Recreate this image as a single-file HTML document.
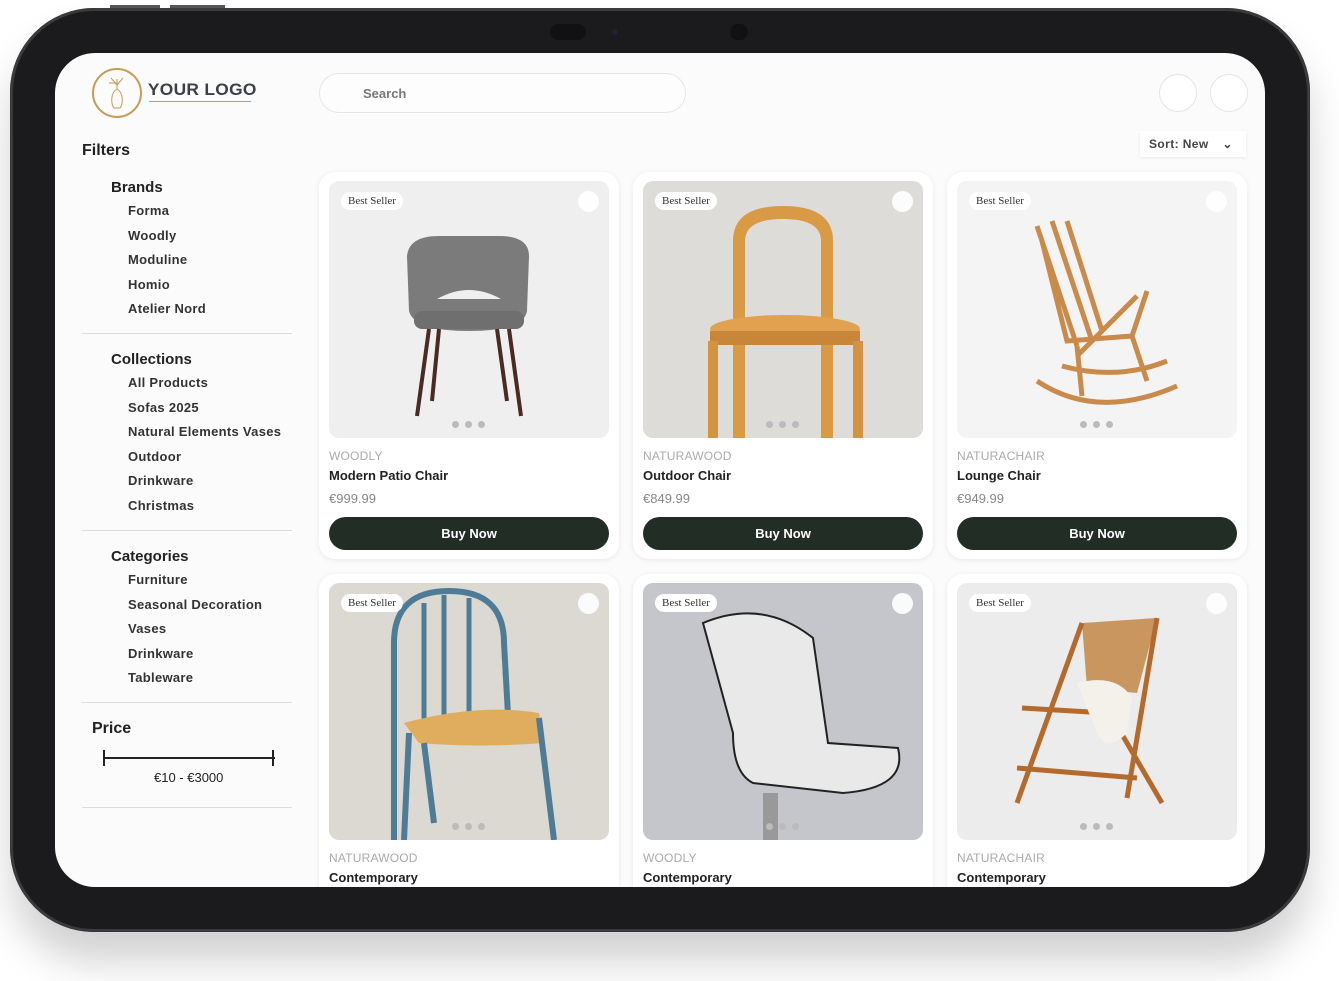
<!DOCTYPE html>
<html><head><meta charset="utf-8"><style>
*{box-sizing:border-box;margin:0;padding:0}
body{width:1339px;height:981px;background:#fff;font-family:"Liberation Sans",sans-serif;position:relative;overflow:hidden}
.dev{position:absolute;left:10px;top:8px;width:1300px;height:924px;background:#1b1b1d;border-radius:84px;box-shadow:0 30px 40px rgba(0,0,0,.18),inset 0 0 0 3px #3a3a3c}
.scr{position:absolute;left:55px;top:53px;width:1210px;height:834px;background:#fbfbfb;border-radius:40px;overflow:hidden}
.a{position:absolute}
.side h4{font-size:15px;color:#222;font-weight:bold}
.side .it{font-size:13px;color:#333;font-weight:bold;letter-spacing:.3px}
.hr{position:absolute;left:27px;width:210px;height:1px;background:#ddd}
.card{position:absolute;width:300px;background:#fff;border-radius:16px;box-shadow:0 1px 6px rgba(0,0,0,.08)}
.img{position:absolute;left:10px;top:9px;width:280px;height:257px;border-radius:10px;overflow:hidden}
.badge{position:absolute;left:12px;top:11px;background:#fff;border-radius:10px;font-family:"Liberation Serif",serif;font-size:11px;color:#333;padding:3px 7px}
.heart{position:absolute;right:10px;top:10px;width:21px;height:21px;border-radius:50%;background:#fff;opacity:.9}
.dots{position:absolute;left:123px;bottom:10px;display:flex;gap:6px}
.dots i{width:7px;height:7px;border-radius:50%;background:#bbb;display:block}
.brand{position:absolute;left:10px;top:277px;font-size:12px;color:#aaa;letter-spacing:.2px}
.name{position:absolute;left:10px;top:296px;font-size:13px;font-weight:bold;color:#222}
.price{position:absolute;left:10px;top:319px;font-size:13px;color:#888}
.btn{position:absolute;left:10px;top:345px;width:280px;height:33px;border-radius:17px;background:#222d26;color:#fff;font-weight:bold;font-size:13px;text-align:center;line-height:33px}
</style></head><body>
<div class="dev"></div>
<div class="a" style="left:110px;top:5px;width:50px;height:3px;background:#555"></div>
<div class="a" style="left:170px;top:5px;width:55px;height:3px;background:#555"></div>
<div class="a" style="left:550px;top:24px;width:36px;height:16px;border-radius:8px;background:#111"></div>
<div class="a" style="left:612px;top:29px;width:6px;height:6px;border-radius:50%;background:#223"></div>
<div class="a" style="left:730px;top:24px;width:18px;height:16px;border-radius:8px;background:#111"></div>
<div class="scr">
 <div class="a" style="left:37px;top:15px;width:50px;height:50px;border-radius:50%;border:2px solid #c89a55"></div>
 <svg class="a" style="left:50px;top:22px" width="24" height="36" viewBox="0 0 24 36"><path d="M12 14 C5 18 6 30 9 33 L15 33 C18 30 19 18 12 14 M12 14 L12 4 M12 10 L6 3 M12 10 L18 3 M12 8 L4 8" fill="none" stroke="#c89a55" stroke-width="1"/></svg>
 <div class="a" style="left:94px;top:27px;font-size:17px;color:#3b3f47;letter-spacing:.3px;font-weight:bold;transform:scaleX(1.02)">YOUR LOGO</div>
 <div class="a" style="left:94px;top:48px;width:102px;height:1px;background:#c89a55"></div>
 <div class="a" style="left:264px;top:20px;width:367px;height:40px;border-radius:20px;border:1px solid #e6e6e6;background:#fdfdfd;font-size:13px;color:#777;font-weight:bold;padding:12px 0 0 43px">Search</div>
 <div class="a" style="left:1104px;top:21px;width:38px;height:38px;border-radius:50%;border:1px solid #e4e4e4;background:#fff"></div>
 <div class="a" style="left:1155px;top:21px;width:38px;height:38px;border-radius:50%;border:1px solid #e4e4e4;background:#fff"></div>
 <div class="a" style="left:1085px;top:78px;width:106px;height:26px;background:#fff;box-shadow:0 1px 3px rgba(0,0,0,.08);font-size:12px;font-weight:bold;color:#444;padding:6px 0 0 9px;letter-spacing:.4px">Sort: New <span style="margin-left:10px">&#8964;</span></div>
 <div class="side">
  <div class="a" style="left:27px;top:89px;font-size:16px;font-weight:bold;color:#222">Filters</div>
  <h4 class="a" style="left:56px;top:126px">Brands</h4>
  <div class="a it" style="left:73px;top:150px">Forma</div>
  <div class="a it" style="left:73px;top:175px">Woodly</div>
  <div class="a it" style="left:73px;top:199px">Moduline</div>
  <div class="a it" style="left:73px;top:224px">Homio</div>
  <div class="a it" style="left:73px;top:248px">Atelier Nord</div>
  <div class="hr" style="top:280px"></div>
  <h4 class="a" style="left:56px;top:298px">Collections</h4>
  <div class="a it" style="left:73px;top:322px">All Products</div>
  <div class="a it" style="left:73px;top:347px">Sofas 2025</div>
  <div class="a it" style="left:73px;top:371px">Natural Elements Vases</div>
  <div class="a it" style="left:73px;top:396px">Outdoor</div>
  <div class="a it" style="left:73px;top:420px">Drinkware</div>
  <div class="a it" style="left:73px;top:445px">Christmas</div>
  <div class="hr" style="top:477px"></div>
  <h4 class="a" style="left:56px;top:495px">Categories</h4>
  <div class="a it" style="left:73px;top:519px">Furniture</div>
  <div class="a it" style="left:73px;top:544px">Seasonal Decoration</div>
  <div class="a it" style="left:73px;top:568px">Vases</div>
  <div class="a it" style="left:73px;top:593px">Drinkware</div>
  <div class="a it" style="left:73px;top:617px">Tableware</div>
  <div class="hr" style="top:649px"></div>
  <div class="a" style="left:37px;top:667px;font-size:16px;font-weight:bold;color:#222">Price</div>
  <div class="a" style="left:48px;top:704px;width:172px;height:2px;background:#222"></div>
  <div class="a" style="left:48px;top:697px;width:2px;height:16px;background:#222"></div>
  <div class="a" style="left:217px;top:697px;width:2px;height:16px;background:#222"></div>
  <div class="a" style="left:99px;top:717px;font-size:13px;color:#222">€10 - €3000</div>
  <div class="hr" style="top:754px"></div>
 </div>

 <div class="card" style="left:264px;top:119px;height:387px">
  <div class="img" style="background:#efefef"><svg width="280" height="257"><path d="M78 75 Q80 55 110 55 L170 55 Q200 55 200 75 L198 130 Q195 150 140 150 Q85 150 80 130Z" fill="#7b7b7b"/><path d="M108 118 Q140 100 172 118" fill="#efefef"/><rect x="85" y="130" width="110" height="18" rx="8" fill="#6f6f6f"/><path d="M100 148 L88 235 M110 148 L103 220 M168 148 L178 220 M180 148 L192 235" stroke="#4a2a22" stroke-width="4"/></svg><div class="badge">Best Seller</div><div class="heart"></div><div class="dots"><i></i><i></i><i></i></div></div>
  <div class="brand">WOODLY</div><div class="name">Modern Patio Chair</div><div class="price">€999.99</div><div class="btn">Buy Now</div>
 </div>
 <div class="card" style="left:578px;top:119px;height:387px">
  <div class="img" style="background:#dedcd9"><svg width="280" height="257"><path d="M90 257 L90 60 Q90 25 140 25 Q190 25 190 60 L190 257 L178 257 L178 60 Q178 38 140 38 Q102 38 102 60 L102 257Z" fill="#d99a45"/><ellipse cx="142" cy="148" rx="75" ry="14" fill="#e0a24f"/><rect x="67" y="150" width="150" height="14" fill="#c7863a"/><path d="M70 160 L70 257 M215 160 L215 257" stroke="#d39340" stroke-width="10"/></svg><div class="badge">Best Seller</div><div class="heart"></div><div class="dots"><i></i><i></i><i></i></div></div>
  <div class="brand">NATURAWOOD</div><div class="name">Outdoor Chair</div><div class="price">€849.99</div><div class="btn">Buy Now</div>
 </div>
 <div class="card" style="left:892px;top:119px;height:387px">
  <div class="img" style="background:#f4f4f4"><svg width="280" height="257"><g stroke="#c98a4a" stroke-width="5" fill="none"><path d="M80 45 L120 165 M95 40 L135 160 M110 40 L145 150 M120 175 L180 115 M85 60 L110 160 L175 155 L190 110 M120 165 L125 215 M175 155 L190 200 M80 200 Q140 240 220 205 M105 185 Q160 200 210 180"/></g></svg><div class="badge">Best Seller</div><div class="heart"></div><div class="dots"><i></i><i></i><i></i></div></div>
  <div class="brand">NATURACHAIR</div><div class="name">Lounge Chair</div><div class="price">€949.99</div><div class="btn">Buy Now</div>
 </div>

 <div class="card" style="left:264px;top:521px;height:340px">
  <div class="img" style="background:#dcd8d2"><svg width="280" height="257"><path d="M65 257 L65 60 Q65 8 120 8 Q175 8 175 60 L180 150" stroke="#4e7c97" stroke-width="6" fill="none"/><path d="M95 20 L95 150 M115 12 L115 150 M140 15 L140 150" stroke="#4e7c97" stroke-width="5"/><path d="M75 140 Q150 120 210 130 L215 160 Q150 165 90 160Z" fill="#e0ac5e"/><path d="M80 150 L75 257 M210 135 L225 257 M95 160 L105 240" stroke="#4e7c97" stroke-width="6"/></svg><div class="badge">Best Seller</div><div class="heart"></div><div class="dots"><i></i><i></i><i></i></div></div>
  <div class="brand">NATURAWOOD</div><div class="name">Contemporary</div>
 </div>
 <div class="card" style="left:578px;top:521px;height:340px">
  <div class="img" style="background:#c4c6cb"><svg width="280" height="257"><path d="M60 40 Q120 15 170 55 L185 160 L255 165 Q265 205 200 210 L110 200 Q90 190 90 150Z" fill="#e9e9e9" stroke="#222" stroke-width="2"/><rect x="120" y="210" width="15" height="47" fill="#999"/></svg><div class="badge">Best Seller</div><div class="heart"></div><div class="dots"><i></i><i></i><i></i></div></div>
  <div class="brand">WOODLY</div><div class="name">Contemporary</div>
 </div>
 <div class="card" style="left:892px;top:521px;height:340px">
  <div class="img" style="background:#ececec"><svg width="280" height="257"><path d="M125 40 L200 35 L180 110 L130 105Z" fill="#c99660"/><g stroke="#b46a2c" stroke-width="5" fill="none"><path d="M125 40 L60 220 M200 35 L170 215 M135 100 L205 220 M65 125 L150 130 M60 185 L180 195"/></g><path d="M120 100 Q160 90 175 115 L170 150 Q150 170 140 150 Z" fill="#f4f1ea"/></svg><div class="badge">Best Seller</div><div class="heart"></div><div class="dots"><i></i><i></i><i></i></div></div>
  <div class="brand">NATURACHAIR</div><div class="name">Contemporary</div>
 </div>
</div>
</body></html>
